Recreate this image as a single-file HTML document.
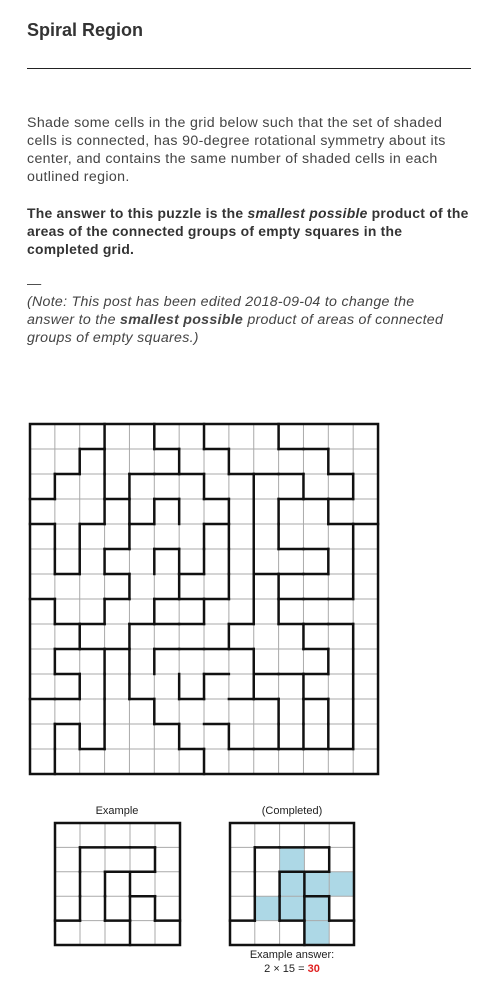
<!DOCTYPE html>
<html><head><meta charset="utf-8">
<style>
body{margin:0;background:#fff;width:477px;height:1002px;overflow:hidden;font-family:"Liberation Sans","DejaVu Sans",sans-serif;color:#333;}
h1{position:absolute;left:27px;top:20px;margin:0;font-size:18px;font-weight:bold;color:#333;}
.rule{position:absolute;left:27px;top:68px;width:444px;height:1px;background:#222;}
p{position:absolute;left:27px;margin:0;font-size:14.2px;line-height:18px;white-space:nowrap;color:#444;letter-spacing:0.35px;}
</style></head><body>
<h1>Spiral Region</h1>
<div class="rule"></div>
<p style="top:114px">Shade some cells in the grid below such that the set of shaded<br>cells is connected, has 90-degree rotational symmetry about its<br>center, and contains the same number of shaded cells in each<br>outlined region.</p>
<p style="top:204px;font-weight:bold;color:#333;letter-spacing:0.25px;font-size:13.9px">The answer to this puzzle is the <i>smallest possible</i> product of the<br>areas of the connected groups of empty squares in the<br>completed grid.</p>
<p style="top:275px">—</p>
<p style="top:293px;font-style:italic;letter-spacing:0.28px">(Note: This post has been edited 2018-09-04 to change the<br>answer to the <b>smallest possible</b> product of areas of connected<br>groups of empty squares.)</p>
<svg id="s" width="477" height="1002" style="position:absolute;left:0;top:0" xmlns="http://www.w3.org/2000/svg">
<text x="117" y="814" font-size="11" text-anchor="middle" font-family="Liberation Sans,sans-serif" fill="#222">Example</text>
<text x="292" y="814" font-size="11" text-anchor="middle" font-family="Liberation Sans,sans-serif" fill="#222">(Completed)</text>
<text x="292" y="958" font-size="11" text-anchor="middle" font-family="Liberation Sans,sans-serif" fill="#222">Example answer:</text>
<text x="292" y="972" font-size="11" text-anchor="middle" font-family="Liberation Sans,sans-serif" fill="#222">2 × 15 = <tspan fill="#e02020" font-weight="bold">30</tspan></text>
</svg>
<script>
var s=document.getElementById('s'),NS='http://www.w3.org/2000/svg';
function ln(x1,y1,x2,y2,w,c){var l=document.createElementNS(NS,'line');l.setAttribute('x1',x1);l.setAttribute('y1',y1);l.setAttribute('x2',x2);l.setAttribute('y2',y2);l.setAttribute('stroke',c);l.setAttribute('stroke-width',w);l.setAttribute('stroke-linecap','square');s.appendChild(l);}
function rect(x,y,w,h,c){var r=document.createElementNS(NS,'rect');r.setAttribute('x',x);r.setAttribute('y',y);r.setAttribute('width',w);r.setAttribute('height',h);r.setAttribute('fill',c);s.appendChild(r);}
function grid(x0,y0,cw,ch,n,H,V,shade){
 if(shade)shade.forEach(function(p){rect(x0+p[1]*cw,y0+p[0]*ch,cw,ch,'#add8e6');});
 for(var i=1;i<n;i++){ln(x0+i*cw,y0,x0+i*cw,y0+n*ch,1,'#aaa');ln(x0,y0+i*ch,x0+n*cw,y0+i*ch,1,'#aaa');}
 for(var r in H)H[r].forEach(function(c){ln(x0+c*cw,y0+r*ch,x0+(c+1)*cw,y0+r*ch,2.5,'#111');});
 for(var c in V)V[c].forEach(function(r){ln(x0+c*cw,y0+r*ch,x0+c*cw,y0+(r+1)*ch,2.5,'#111');});
 var b=document.createElementNS(NS,'rect');b.setAttribute('x',x0);b.setAttribute('y',y0);b.setAttribute('width',n*cw);b.setAttribute('height',n*ch);b.setAttribute('fill','none');b.setAttribute('stroke','#111');b.setAttribute('stroke-width',2.5);s.appendChild(b);
}
grid(30,424,24.86,25,14,{
1:[2,5,7,10,11],2:[1,4,5,6,8,9,10,12],3:[0,3,5,7,10,11,12],4:[0,2,4,7,12,13],5:[3,5,10,11],6:[1,3,6,9,10,11],
7:[0,3,5,6,7,10,11,12],8:[1,2,4,5,6,8,10,11,12],9:[1,2,3,5,6,7,8,11],10:[1,7,9,10,11],11:[0,1,4,6,8,9,11],12:[1,5,7],13:[2,6,8,9,10,11,12]},
{1:[2,4,5,7,9,12,13],2:[1,4,5,8,10,12],3:[0,1,2,3,5,7,9,10,11,12],4:[2,3,4,6,8,9,10],5:[0,3,5,7,9,11],6:[1,3,5,6,10,12],
7:[0,2,4,5,7,10,13],8:[1,3,4,5,6,8,12],9:[2,3,4,5,6,7,9,10],10:[0,3,4,6,7,11,12],11:[2,8,10,11,12],12:[1,3,5,9,11,12],13:[2,4,5,6,8,9,10,11,12]});
var EH={1:[1,2,3],2:[2,3],3:[3],4:[0,2,4]},EV={1:[1,2,3],2:[2,3],3:[2,3,4],4:[1,3]};
grid(55,823,25,24.4,5,EH,EV);
grid(230,823,24.8,24.4,5,EH,EV,[[1,2],[2,2],[2,3],[2,4],[3,1],[3,2],[3,3],[4,3]]);
</script>
</body></html>
